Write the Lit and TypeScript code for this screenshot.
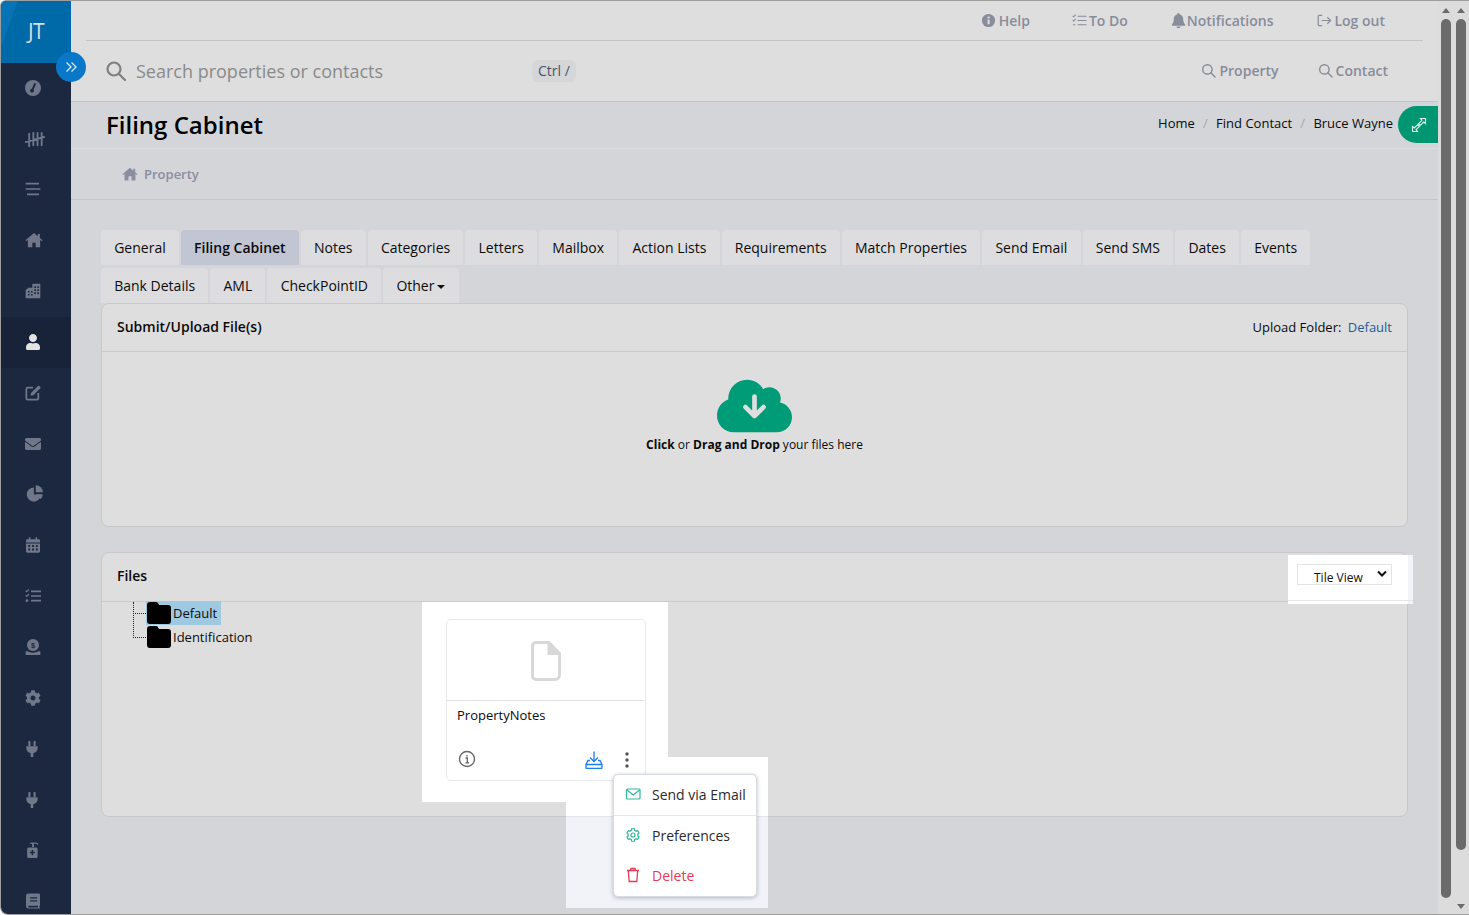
import { LitElement, html, css } from "lit";
import { customElement } from "lit/decorators.js";

const cog = "M487.4 315.7l-42.6-24.6c4.3-23.2 4.3-47 0-70.2l42.6-24.6c4.9-2.8 7.1-8.6 5.5-14-11.1-35.6-30-67.8-54.7-94.6-3.8-4.1-10-5.1-14.8-2.3L380.8 110c-17.9-15.4-38.5-27.3-60.8-35.1V25.8c0-5.6-3.9-10.5-9.4-11.7-36.7-8.2-74.3-7.8-109.2 0-5.5 1.2-9.4 6.1-9.4 11.7V75c-22.2 7.9-42.8 19.8-60.8 35.1L88.7 85.5c-4.9-2.8-11-1.9-14.8 2.3-24.7 26.7-43.6 58.9-54.7 94.6-1.7 5.4.6 11.2 5.5 14L67.3 221c-4.3 23.2-4.3 47 0 70.2l-42.6 24.6c-4.9 2.8-7.1 8.6-5.5 14 11.1 35.6 30 67.8 54.7 94.6 3.8 4.1 10 5.1 14.8 2.3l42.6-24.6c17.9 15.4 38.5 27.3 60.8 35.1v49.2c0 5.6 3.9 10.5 9.4 11.7 36.7 8.2 74.3 7.8 109.2 0 5.5-1.2 9.4-6.1 9.4-11.7v-49.2c22.2-7.9 42.8-19.8 60.8-35.1l42.6 24.6c4.9 2.8 11 1.9 14.8-2.3 24.7-26.7 43.6-58.9 54.7-94.6 1.5-5.5-.7-11.3-5.6-14.1zM256 336c-44.1 0-80-35.9-80-80s35.9-80 80-80 80 35.9 80 80-35.9 80-80 80z";
const user = "M224 256c70.7 0 128-57.3 128-128S294.7 0 224 0 96 57.3 96 128s57.3 128 128 128zm89.6 32h-16.7c-22.2 10.2-46.9 16-72.9 16s-50.6-5.8-72.9-16h-16.7C60.2 288 0 348.2 0 422.4V464c0 26.5 21.5 48 48 48h352c26.5 0 48-21.5 48-48v-41.6c0-74.2-60.2-134.4-134.4-134.4z";
const env = "M502.3 190.8c3.9-3.1 9.7-.2 9.7 4.7V400c0 26.5-21.5 48-48 48H48c-26.5 0-48-21.5-48-48V195.6c0-5 5.7-7.8 9.7-4.7 22.4 17.4 52.1 39.5 154.1 113.6 21.1 15.4 56.7 47.8 92.2 47.6 35.7.3 72-32.8 92.3-47.6 102-74.1 131.6-96.3 154-113.7zM256 320c23.2.4 56.6-29.2 73.4-41.4 132.7-96.3 142.8-104.7 173.4-128.7 5.8-4.5 9.2-11.5 9.2-18.9v-19c0-26.5-21.5-48-48-48H48C21.5 64 0 85.5 0 112v19c0 7.4 3.4 14.3 9.2 18.9 30.6 23.9 40.7 32.4 173.4 128.7 16.8 12.2 50.2 41.8 73.4 41.4z";
const cloud = "M537.6 226.6c4.1-10.7 6.4-22.4 6.4-34.6 0-53-43-96-96-96-19.7 0-38.1 6-53.3 16.2C367 64.2 315.3 32 256 32c-88.4 0-160 71.6-160 160 0 2.7.1 5.4.2 8.1C40.2 219.8 0 273.2 0 336c0 79.5 64.5 144 144 144h368c70.7 0 128-57.3 128-128 0-61.9-44-113.6-102.4-125.4z";
const homeP = "M12 2.600 .6 12.400l1 1.200L3.800 11.800V21.600h6V15.500h4.400v6.100h6V11.800l2.200 1.800 1-1.200-3.600-3.100V4h-2.800v3z";

const plug = html`<svg class="i plug" viewBox="0 0 18 24" fill="currentColor"><rect x="3.500" y="0" width="3.200" height="8" rx="1"/><rect x="11.300" y="0" width="3.200" height="8" rx="1"/><path d="M.5 8h17v3c0 4-3 6.500-6.500 7.200V24H7v-5.800C3.500 17.500.5 15 .5 11z"/></svg>`;

const sideIcons = [
  html`<svg class="i" viewBox="0 0 24 24"><circle cx="12" cy="12" r="12" fill="currentColor"/><path d="M10.500 16 15 6" stroke="#1c2840" stroke-width="2.800" stroke-linecap="round"/><circle cx="10.500" cy="16" r="2.800" fill="#1c2840"/></svg>`,
  html`<svg class="i wide" viewBox="0 0 24 20" fill="none" stroke="currentColor" stroke-width="2.200" stroke-linecap="round"><path d="M5 3v15M10 2v15M15 2v15M20 2v15M1 13 23 7"/></svg>`,
  html`<svg class="i up1" viewBox="0 0 24 24" fill="none" stroke="currentColor" stroke-width="2.600"><path d="M1 4h20M1 12h22M3 20h18"/></svg>`,
  html`<svg class="i home up1" viewBox="0 0 24 24" fill="currentColor"><path d="${homeP}"/></svg>`,
  html`<svg class="i up1" viewBox="0 0 24 24" fill="currentColor"><path fill-rule="evenodd" d="M11 1h12v22H1V10l3-1.500V7h7zM14 5v2.400h2.400V5zM18.500 5v2.400h2.400V5zM14 9.500v2.400h2.400V9.500zM18.500 9.500v2.400h2.400V9.500zM14 14v2.400h2.400V14zM18.500 14v2.400h2.400V14zM4.500 12v2.400h2.400V12zM9 12v2.400h2.400V12zM4.500 16.500v2.400h2.400v-2.400zM9 16.500v2.400h2.400v-2.400z"/></svg>`,
  html`<svg class="i" viewBox="0 0 448 512" fill="currentColor"><path d="${user}"/></svg>`,
  html`<svg class="i" viewBox="0 0 24 24" fill="none" stroke="currentColor" stroke-width="2.600"><path d="M12 4H4a2 2 0 0 0-2 2v14a2 2 0 0 0 2 2h14a2 2 0 0 0 2-2v-8"/><path fill="currentColor" stroke="none" d="M9 12 19.500 1.500a1.500 1.500 0 0 1 2 0l1.500 1.500a1.500 1.500 0 0 1 0 2L12.500 15.500 8.500 16z"/></svg>`,
  html`<svg class="i" viewBox="0 0 512 512" fill="currentColor"><path d="${env}"/></svg>`,
  html`<svg class="i pie" viewBox="0 0 24 24" fill="currentColor"><path d="M10.500 4.500A9.500 9.500 0 1 0 20 14h-9.500z"/><path d="M13 1.500A9.500 9.500 0 0 1 22.500 11H13z"/><path d="M13 13.500h9.500a9.500 9.500 0 0 1-3 6.500z"/></svg>`,
  html`<svg class="i narrow up1" viewBox="0 0 22 24" fill="currentColor"><path fill-rule="evenodd" d="M4.500 0h2.500v3h8V0h2.500v3H20a2 2 0 0 1 2 2v3H0V5a2 2 0 0 1 2-2h2.500zM0 9.500h22V22a2 2 0 0 1-2 2H2a2 2 0 0 1-2-2zM3.500 12v3h3v-3zM9.500 12v3h3v-3zM15.500 12v3h3v-3zM3.500 17.500v3h3v-3zM9.500 17.500v3h3v-3zM15.500 17.500v3h3v-3z"/></svg>`,
  html`<svg class="i" viewBox="0 0 24 24" fill="none" stroke="currentColor" stroke-width="2.400"><path d="M9 5h15M9 12h15M9 19h15"/><path stroke-width="1.800" d="m1 4 1.500 1.600L6 2M1 11l1.500 1.600L6 9"/><circle cx="3" cy="19" r=".9"/></svg>`,
  html`<svg class="i" viewBox="0 0 24 24"><circle cx="12" cy="9" r="9" fill="currentColor"/><text x="12" y="13" text-anchor="middle" font-size="11" font-weight="700" font-family="Liberation Sans" fill="#1c2840">$</text><path d="M1 18.500h3.500c1.500 1.500 4 2 7.500 2s6-.5 7.500-2H23V24H1z" fill="currentColor"/></svg>`,
  html`<svg class="i" viewBox="0 0 512 512" fill="currentColor"><path d="${cog}"/></svg>`,
  plug,
  plug,
  html`<svg class="i narrow" viewBox="0 0 20 26" fill="currentColor"><path fill-rule="evenodd" d="M7 1h7c3 0 4.500 1.500 4.500 3.500h-1.800c0-1-.8-1.800-2.700-1.800h-2.500V8h-3V3H5V1.500zM3 9h12a2.500 2.500 0 0 1 2.500 2.500v12A2.500 2.500 0 0 1 15 26H3a2.500 2.500 0 0 1-2.500-2.500v-12A2.500 2.500 0 0 1 3 9zm4.800 4v3H5v2.400h2.800v3h2.400v-3H13V16h-2.800v-3z"/></svg>`,
  html`<svg class="i narrow" viewBox="0 0 24 26" fill="currentColor"><path fill-rule="evenodd" d="M4 0h18a2 2 0 0 1 2 2v18c0 1-.5 1.500-1 1.800V24h1v2H4a4 4 0 0 1-4-4V4a4 4 0 0 1 4-4zm3 6.500v2.200h12V6.500zm0 5v2.200h12v-2.200zM4 22v2h16.500v-3H5a1 1 0 0 0-1 1z"/></svg>`,
];

const tabs1 = ["General", "Filing Cabinet", "Notes", "Categories", "Letters", "Mailbox", "Action Lists", "Requirements", "Match Properties", "Send Email", "Send SMS", "Dates", "Events"];
const tabs2 = ["Bank Details", "AML", "CheckPointID"];

const searchIcon = html`<svg class="sm" viewBox="0 0 16 16" fill="none" stroke="currentColor" stroke-width="1.500"><circle cx="6.800" cy="6.800" r="5"/><path d="m10.500 10.500 4.500 4.500" stroke-linecap="round"/></svg>`;

@customElement("app-root")
export class AppRoot extends LitElement {
  static styles = css`
    :host { display: block; height: 915px; overflow: hidden; font-family: "Open Sans", "Noto Sans", sans-serif; color: #0b0b0b; }
    * { box-sizing: border-box; }
    .win { display: flex; height: 915px; background: #dcdcdc; border-top: 1px solid #9e9e9e; border-left: 1px solid #9e9e9e; border-top-left-radius: 6px; border-bottom: 1px solid #9e9e9e; border-bottom-left-radius: 8px; overflow: hidden; }
    .side { width: 70px; flex: none; background: #1c2840; color: #6f7789; display: flex; flex-direction: column; }
    .logo { height: 62px; flex: none; display: flex; align-items: center; justify-content: center; color: #d8dde3; font-size: 21px; background: linear-gradient(110deg, #0674b4 0 18%, #0069a8 18% 100%); letter-spacing: -.5px; padding-bottom: 3px; }
    .nav { height: 50.8px; flex: none; display: flex; align-items: center; justify-content: center; padding-right: 6px; }
    .nav.on { background: #18233a; color: #e3e3e3; }
    .i { width: 16px; height: 16px; display: block; }
    .i.up1 { margin-bottom: 2px; }
    .i.wide { width: 20px; height: 17px; margin-left: 4px; }
    .i.home { width: 18px; height: 18px; margin-left: 1px; }
    .i.pie { width: 18px; height: 18px; margin-left: 3px; margin-bottom: 3px; }
    .i.narrow { width: 14px; }
    .i.plug { width: 12px; margin-right: 3px; }
    .main { flex: 1; min-width: 0; background: #d4d5d9; position: relative; display: flex; flex-direction: column; }
    .head { background: #dedede; border-bottom: 1px solid #c3c4c7; height: 101px; flex: none; }
    .top { height: 40px; margin: 0 15px; border-bottom: 1px solid #c3c4c6; display: flex; justify-content: flex-end; align-items: center; padding-bottom: 1px; color: #888c9b; font-size: 14px; font-weight: 600; }
    .top a, .sr a { display: flex; align-items: center; gap: 2px; }
    .sm { width: 15px; height: 15px; display: block; flex: none; }
    .top .help { margin-right: 42px; gap: 3px; }
    .top .todo { margin-right: 43px; }
    .top .noti { margin-right: 44px; gap: 1px; }
    .top .out { margin-right: 38px; gap: 2px; }
    .sr { height: 60px; display: flex; align-items: center; padding-left: 35px; }
    .sr .mag { width: 20px; height: 20px; color: #7f7f7f; margin-right: 10px; }
    .sr .ph { font-size: 18px; color: #8a8a8a; width: 396px; }
    .kbd { font-size: 14px; background: #d5d6d8; color: #4c5464; border-radius: 6px; padding: 1px 6px; height: 22px; line-height: 20px; }
    .sr .r { margin-left: auto; display: flex; color: #888c9b; font-size: 14px; font-weight: 600; padding-right: 50px; gap: 39px; margin-top: -2px; }
    .sr .r a { gap: 3px; }
    .title { height: 47px; flex: none; display: flex; align-items: center; border-bottom: 1px solid #dcdde0; padding-left: 35px; }
    .title h1 { margin: -2px 0 0; font-size: 24px; font-weight: 600; flex: 1; color: #000; }
    .crumb { display: flex; font-size: 13px; align-items: center; margin-right: 5px; color: #0b0b0b; margin-top: -5px; }
    .crumb i { color: #a9a9a9; margin: 0 8.250px; font-style: normal; }
    .exp { width: 40px; height: 37px; background: #009672; border-radius: 19px 0 0 19px; color: #dcefe9; display: flex; align-items: center; justify-content: center; margin-top: -1px; padding-left: 2px; }
    .exp svg { width: 16px; height: 16px; display: block; }
    .prop { height: 51px; flex: none; border-bottom: 1px solid #c5c6ca; display: flex; align-items: center; gap: 6px; padding-left: 51px; color: #8a8e9e; font-size: 13px; font-weight: 600; }
    .prop .sm { width: 16px; height: 16px; }
    .body { flex: 1; padding: 30px 30px 0; display: flex; flex-direction: column; }
    .tabs { display: flex; gap: 2px; margin-bottom: 3px; }
    .tab { height: 35px; padding: 0 13.200px; background: #dddddf; border-radius: 4px 4px 0 0; font-size: 14px; display: flex; align-items: center; gap: 3px; white-space: nowrap; }
    .tab.on { background: #c2c5d2; font-weight: 600; }
    .caret { width: 0; height: 0; border-left: 4px solid transparent; border-right: 4px solid transparent; border-top: 4px solid #111; margin-top: 2px; }
    .tabs.second { margin-bottom: 0; }
    .panel { background: #dedede; border: 1px solid #c6c8cb; border-radius: 8px; position: relative; }
    .ph2 { height: 48px; border-bottom: 1px solid #c9cacb; display: flex; align-items: center; justify-content: space-between; padding: 0 15px 2px; font-size: 14px; font-weight: 600; }
    .files .ph2 { height: 49px; padding-bottom: 3px; }
    .ph2 .u { font-size: 13px; font-weight: 400; }
    .ph2 .u b { font-weight: 400; color: #245a96; margin-left: 3px; }
    .drop { height: 174px; display: flex; flex-direction: column; align-items: center; padding-top: 32px; font-size: 12px; }
    .drop svg { width: 75px; height: 60px; display: block; margin-top: -8px; }
    .drop p { margin: 0; }
    .drop b { font-weight: 700; }
    .files { margin-top: 25px; }
    .fb { display: flex; height: 214px; }
    .tree { width: 320px; flex: none; padding-left: 31px; font-size: 13px; position: relative; }
    .node { height: 24px; display: flex; align-items: center; margin-left: 13px; position: relative; top: -1px; }
    .node::before { content: ""; width: 13px; border-top: 1px dotted #222; position: absolute; left: -13px; top: 12px; }
    .tree .v { position: absolute; left: 31px; top: 0; height: 36px; border-left: 1px dotted #222; }
    .fo { width: 24px; height: 22px; flex: none; display: block; margin: 0 2px 0 1px; }
    .sel .wrap { background: #9ec9e0; height: 24px; padding: 0 4px 0 0; }
    .wrap { display: flex; align-items: center; }
    .cell { width: 246px; height: 200px; background: #fff; padding: 17px 22px 0 24px; position: relative; z-index: 1; }
    .card { width: 200px; height: 162px; border: 1px solid #e8eaee; border-radius: 5px; background: #fff; display: flex; flex-direction: column; }
    .thumb { height: 81px; flex: none; border-bottom: 1px solid #e1e4ea; display: flex; align-items: center; justify-content: center; }
    .thumb svg { width: 30px; height: 40px; display: block; margin-top: 1px; }
    .fname { font-size: 13px; padding: 5px 10px 0; flex: 1; }
    .acts { display: flex; align-items: center; padding: 0 10px 11px 11px; color: #666; }
    .acts .inf { width: 18px; height: 18px; display: block; }
    .acts .dl { width: 18px; height: 18px; margin-left: auto; display: block; margin-right: 22px; margin-top: 2px; }
    .acts .dots { width: 4px; height: 16px; display: block; margin-right: 6px; margin-top: 1px; }
    .hole { position: absolute; left: 464px; top: 204px; width: 202px; height: 151px; background: linear-gradient(#fff 0 59px, #e2e5ea 59px 60px, #f1f3f8 60px); z-index: 0; }
    .menu { position: absolute; left: 511px; top: 221px; width: 144px; height: 123px; background: #fff; border: 1px solid #d8dbe2; border-radius: 5px; box-shadow: 0 1px 4px rgba(60, 70, 90, .35); z-index: 2; font-size: 14px; color: #2b2b2b; display: flex; flex-direction: column; }
    .mi { display: flex; align-items: center; padding: 0 0 2px 11px; gap: 11px; height: 40px; white-space: nowrap; }
    .mi:first-child { height: 41px; border-bottom: 1px solid #e4e6ea; }
    .mi svg { width: 16px; height: 16px; display: block; flex: none; color: #2eb898; }
    .mi.del { color: #e43c55; }
    .mi.del svg { color: #e43c55; }
    .vhole { position: absolute; right: -6px; top: 2px; width: 125px; height: 49px; background: linear-gradient(transparent 45px, #e6e6e6 45px 46px, transparent 46px), linear-gradient(90deg, #fff 0 120px, #f1f3f8 120px); display: flex; align-items: flex-start; padding: 9px 0 0 9px; }
    .sel-box { width: 95px; height: 21px; border: 1px solid #e4e4e4; font-size: 12px; position: relative; padding: 5px 0 0 16px; line-height: 16px; overflow: hidden; color: #111; }
    .sel-box svg { position: absolute; right: 3px; top: 3px; width: 12px; height: 12px; }
    .bars { width: 31px; flex: none; display: flex; gap: 5px; padding-left: 3px; background: #dcdcdc; }
    .sb { width: 10px; display: flex; flex-direction: column; align-items: center; position: relative; }
    .up { width: 0; height: 0; border-left: 4px solid transparent; border-right: 4px solid transparent; border-bottom: 5px solid #6b6b6b; margin-top: 7px; }
    .th { width: 10px; height: 879px; background: #6b6b6b; border-radius: 5px; margin-top: 6px; }
    .th.short { height: 831px; }
    .dn { width: 0; height: 0; border-left: 4px solid transparent; border-right: 4px solid transparent; border-top: 5px solid #6b6b6b; margin-top: auto; margin-bottom: 5px; }
    .tog { position: absolute; left: -15px; top: 51px; width: 30px; height: 30px; border-radius: 50%; background: #0a78c9; color: #d8e8f4; display: flex; align-items: center; justify-content: center; z-index: 3; }
    .tog svg { width: 14px; height: 14px; display: block; }
  `;

  render() {
    const folder = html`<svg class="fo" viewBox="0 0 24 22" fill="#000"><path d="M3 0h6c1.500 0 2 1 3 3h9a3 3 0 0 1 3 3v13a3 3 0 0 1-3 3H3a3 3 0 0 1-3-3V3a3 3 0 0 1 3-3z"/></svg>`;
    return html`
      <div class="win">
        <nav class="side">
          <div class="logo">JT</div>
          ${sideIcons.map((ic, n) => html`<div class="nav ${n === 5 ? "on" : ""}">${ic}</div>`)}
        </nav>
        <main class="main">
          <div class="tog"><svg viewBox="0 0 14 14" fill="none" stroke="currentColor" stroke-width="1.300"><path d="m2.500 2.500 4.500 4.500-4.500 4.500M7.500 2.500l4.500 4.500-4.500 4.500"/></svg></div>
          <header class="head">
            <div class="top">
              <a class="help"><svg class="sm" viewBox="0 0 16 16"><circle cx="8" cy="8" r="7" fill="currentColor"/><rect x="7" y="7" width="2.200" height="5" fill="#dedede"/><rect x="7" y="3.800" width="2.200" height="2" fill="#dedede"/></svg>Help</a>
              <a class="todo"><svg class="sm" viewBox="0 0 16 16" fill="none" stroke="currentColor" stroke-width="1.100"><path d="M6 3.500h9.500M6 8h9.500M6 12.500h9.500"/><path d="m.8 3 1 1L4 1.800M.8 7.500l1 1L4 6.300M1 12.500h2.500"/></svg>To Do</a>
              <a class="noti"><svg class="sm" viewBox="0 0 16 16" fill="currentColor"><path d="M8 0a1.200 1.200 0 0 1 1.200 1.300C11.500 1.900 13 3.800 13 6.500c0 3.500 1 4.500 2 5.700.4.500.1 1.300-.7 1.300H1.700c-.8 0-1.100-.8-.7-1.300C2 11 3 10 3 6.500c0-2.700 1.500-4.600 3.800-5.200A1.200 1.200 0 0 1 8 0zM6 14.500h4a2 2 0 0 1-4 0z"/></svg>Notifications</a>
              <a class="out"><svg class="sm" viewBox="0 0 16 16" fill="none" stroke="currentColor" stroke-width="1.300"><path d="M5.500 2.500H2.300a1 1 0 0 0-1 1v9a1 1 0 0 0 1 1h3.200M5 8h9.500M11 4.500 14.500 8 11 11.500"/></svg>Log out</a>
            </div>
            <div class="sr">
              <svg class="mag" viewBox="0 0 20 20" fill="none" stroke="currentColor" stroke-width="2.200"><circle cx="8" cy="8" r="6.500"/><path d="m13 13 6 6" stroke-linecap="round"/></svg>
              <span class="ph">Search properties or contacts</span>
              <span class="kbd">Ctrl /</span>
              <div class="r"><a>${searchIcon}Property</a><a>${searchIcon}Contact</a></div>
            </div>
          </header>
          <div class="title">
            <h1>Filing Cabinet</h1>
            <div class="crumb"><span>Home</span><i>/</i><span>Find Contact</span><i>/</i><span>Bruce Wayne</span></div>
            <div class="exp"><svg viewBox="0 0 16 16" fill="none" stroke="currentColor" stroke-width="1.100"><path d="M9.500 1.500h5v5l-1.800-1.500-3.500 3.500-1.700-1.700 3.500-3.500z"/><path d="M6.500 14.500h-5v-5l1.800 1.500 3.500-3.500 1.700 1.700-3.500 3.500z"/></svg></div>
          </div>
          <div class="prop"><svg class="sm" viewBox="0 0 24 24" fill="currentColor"><path d="${homeP}"/></svg>Property</div>
          <div class="body">
            <div class="tabs">${tabs1.map((t) => html`<div class="tab ${t === "Filing Cabinet" ? "on" : ""}">${t}</div>`)}</div>
            <div class="tabs second">${tabs2.map((t) => html`<div class="tab">${t}</div>`)}<div class="tab">Other<span class="caret"></span></div></div>
            <section class="panel">
              <div class="ph2"><span>Submit/Upload File(s)</span><span class="u">Upload Folder: <b>Default</b></span></div>
              <div class="drop">
                <svg viewBox="0 0 640 512"><path fill="#009b77" d="${cloud}"/><path d="M320 175v165M243 265l77 77 77-77" fill="none" stroke="#dedede" stroke-width="40" stroke-linecap="round" stroke-linejoin="round"/></svg>
                <p><b>Click</b> or <b>Drag and Drop</b> your files here</p>
              </div>
            </section>
            <section class="panel files">
              <div class="ph2"><span>Files</span></div>
              <div class="vhole"><div class="sel-box">Tile View<svg viewBox="0 0 12 12" fill="none" stroke="#111" stroke-width="2"><path d="m2 3.500 4 4 4-4"/></svg></div></div>
              <div class="fb">
                <div class="tree">
                  <span class="v"></span>
                  <div class="node sel"><div class="wrap">${folder}<span>Default</span></div></div>
                  <div class="node"><div class="wrap">${folder}<span>Identification</span></div></div>
                </div>
                <div class="cell">
                  <div class="card">
                    <div class="thumb"><svg viewBox="0 0 30 40" fill="none" stroke="#d8d8d8" stroke-width="3"><path d="M5 1.500h13l10.500 11V34a4.500 4.500 0 0 1-4.500 4.500H5A3.500 3.500 0 0 1 1.500 35V5A3.500 3.500 0 0 1 5 1.500z"/><path fill="#d8d8d8" d="M18 2v10.500h10z"/></svg></div>
                    <div class="fname">PropertyNotes</div>
                    <div class="acts">
                      <svg class="inf" viewBox="0 0 18 18" fill="none" stroke="currentColor" stroke-width="1.300"><circle cx="9" cy="9" r="7.500"/><path d="M7.500 8H9.300v4.500M7.500 12.800h3.600M9 5v1.500"/></svg>
                      <svg class="dl" viewBox="0 0 18 18" fill="none" stroke="#1a7ef0" stroke-width="1.300"><path d="M9 .5v10M5 6.500l4 4 4-4M5 9.500H3L1 13.500v3a1 1 0 0 0 1 1h14a1 1 0 0 0 1-1v-3l-2-4h-2M1 13.500h16"/></svg>
                      <svg class="dots" viewBox="0 0 4 16" fill="#555"><circle cx="2" cy="2" r="1.700"/><circle cx="2" cy="8" r="1.700"/><circle cx="2" cy="14" r="1.700"/></svg>
                    </div>
                  </div>
                </div>
              </div>
              <div class="hole"></div>
              <div class="menu">
                <div class="mi"><svg viewBox="0 0 16 16" fill="none" stroke="currentColor" stroke-width="1.200"><rect x="1.500" y="3" width="13.500" height="10" rx="1"/><path d="m2 4 6.200 5L14.500 4"/></svg>Send via Email</div>
                <div class="mi"><svg viewBox="-60 -60 632 632" fill="none" stroke="currentColor" stroke-width="46"><path d="${cog}"/></svg>Preferences</div>
                <div class="mi del"><svg viewBox="0 0 16 16" fill="none" stroke="currentColor" stroke-width="1.300"><path d="M2 3.500h12M5.500 3.500l.5-2h4l.5 2M3.300 3.500l.9 11h7.600l.9-11"/></svg>Delete</div>
              </div>
            </section>
          </div>
        </main>
        <div class="bars">
          <div class="sb"><span class="up"></span><span class="th"></span></div>
          <div class="sb"><span class="up"></span><span class="th short"></span><span class="dn"></span></div>
        </div>
      </div>
    `;
  }
}
